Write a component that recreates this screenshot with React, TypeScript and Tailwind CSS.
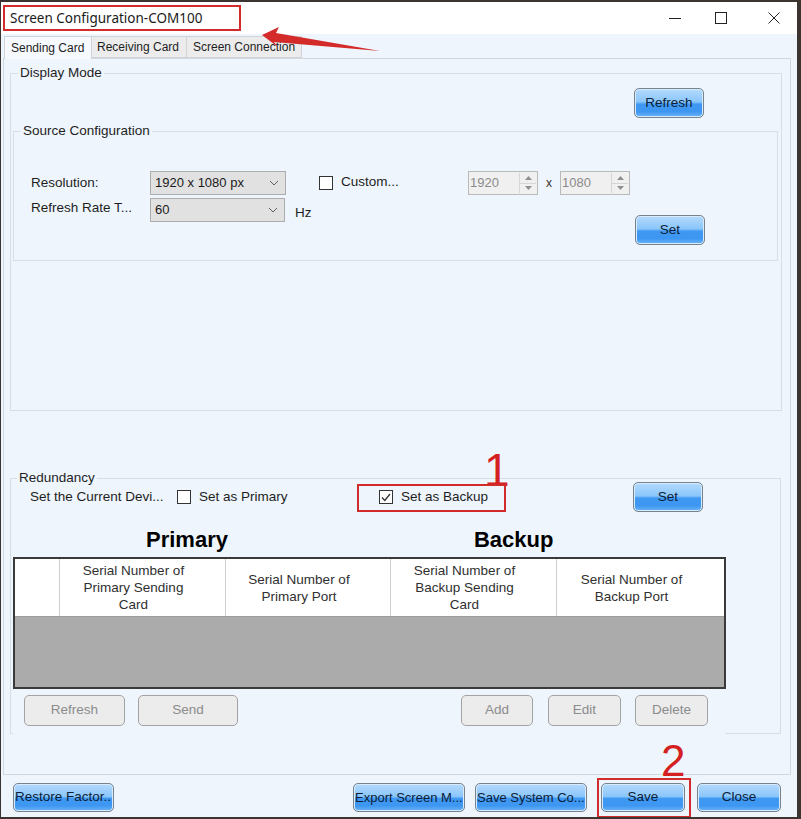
import React from 'react';

const blueBtn =
  'flex items-center justify-center rounded-[5px] border border-[#76838f] bg-[linear-gradient(180deg,#b4dafd_0%,#8ac6fb_46%,#3f98f2_54%,#3d96f1_80%,#6cb4f7_100%)] shadow-[inset_0_0_0_1px_#d6ebfd] text-[13.5px] text-[#0b1d38]';
const grayBtn =
  'flex items-center justify-center rounded-[5px] border border-[#a3a3a3] bg-[#ececec] text-[13.5px] text-[#8b8b8b]';

function Chevron() {
  return (
    <svg width="10" height="6" viewBox="0 0 10 6" className="ml-auto mr-[6px]">
      <path d="M1 1 L5 5 L9 1" fill="none" stroke="#606060" strokeWidth="1" />
    </svg>
  );
}

function Select({ value, width }: { value: string; width: string }) {
  return (
    <div className={`flex h-[24px] items-center border border-[#adadad] bg-[#e1e1e1] pl-[4px] text-[13px] text-[#1a1a1a] ${width}`}>
      <span>{value}</span>
      <Chevron />
    </div>
  );
}

function Spin({ value }: { value: string }) {
  return (
    <div className="flex h-[24px] w-[70px] items-center border border-[#b9b9b9] bg-[#f0f0f0] text-[13px] text-[#8a8a8a]">
      <span className="pl-[1px]">{value}</span>
      <div className="ml-auto mr-[1px] flex h-[20px] w-[17px] flex-col border-l border-[#d6d6d6]">
        <div className="flex flex-1 items-center justify-center border-b border-[#d6d6d6]">
          <svg width="7" height="4" viewBox="0 0 7 4"><path d="M0 4 L3.5 0 L7 4 Z" fill="#8f8f8f" /></svg>
        </div>
        <div className="flex flex-1 items-center justify-center">
          <svg width="7" height="4" viewBox="0 0 7 4"><path d="M0 0 L3.5 4 L7 0 Z" fill="#8f8f8f" /></svg>
        </div>
      </div>
    </div>
  );
}

function Check({ checked }: { checked?: boolean }) {
  return (
    <div className="flex h-[14px] w-[14px] shrink-0 items-center justify-center border border-[#333] bg-white">
      {checked && (
        <svg width="10" height="9" viewBox="0 0 10 9">
          <path d="M1 4.5 L3.8 7.5 L9 1" fill="none" stroke="#333" strokeWidth="1.3" />
        </svg>
      )}
    </div>
  );
}

const HEAD = [
  { w: 'w-[44px]', text: '' },
  { w: 'w-[166px]', text: 'Serial Number of Primary Sending Card' },
  { w: 'w-[165px]', text: 'Serial Number of Primary Port' },
  { w: 'w-[166px]', text: 'Serial Number of Backup Sending Card' },
  { w: 'w-[168px]', text: 'Serial Number of Backup Port' },
];

export default function App() {
  return (
    <div className="relative h-[819px] w-[801px] overflow-hidden border-b-2 border-l border-r-4 border-t-2 border-[#3b3431] bg-[#eef5fc] font-['Liberation_Sans',Arial,sans-serif] text-[#1e1e1e]">
      {/* title bar */}
      <div className="flex h-[32px] items-center bg-white pl-[9px]">
        <span className="font-['Noto_Sans',sans-serif] text-[13.5px] text-[#1a1a1a]">Screen Configuration-COM100</span>
        <div className="ml-auto flex h-full items-center">
          <div className="flex h-full w-[46px] items-center justify-center">
            <svg width="12" height="12" viewBox="0 0 12 12"><path d="M0 6.5 H12" stroke="#222" strokeWidth="1" /></svg>
          </div>
          <div className="mr-[7px] flex h-full w-[46px] items-center justify-center">
            <svg width="12" height="12" viewBox="0 0 12 12"><rect x="0.5" y="0.5" width="11" height="11" fill="none" stroke="#222" strokeWidth="1" /></svg>
          </div>
          <div className="flex h-full w-[46px] items-center justify-center">
            <svg width="12" height="12" viewBox="0 0 12 12"><path d="M0.5 0.5 L11.5 11.5 M11.5 0.5 L0.5 11.5" stroke="#222" strokeWidth="1" /></svg>
          </div>
        </div>
      </div>

      {/* tabs */}
      <div className="flex h-[24px] items-end pl-[3px] text-[12px]">
        <div className="relative z-10 -mb-px flex h-[23px] w-[88px] items-center border border-b-0 border-[#d0d4d8] bg-[#f6f9fd] pl-[6px]">Sending Card</div>
        <div className="flex h-[22px] w-[95px] items-center border border-l-0 border-[#d0d4d8] bg-[#ececec] pl-[5px]">Receiving Card</div>
        <div className="flex h-[22px] w-[115px] items-center border border-l-0 border-[#d0d4d8] bg-[#ececec] pl-[6px]">Screen Connection</div>
      </div>

      {/* tab panel */}
      <div className="ml-[2px] flex h-[717px] w-[788px] flex-col border border-[#d3d8dc] bg-[#eef5fc] text-[13.5px]">
        <fieldset className="ml-[6px] mt-[6px] h-[346px] w-[772px] border border-[#d6dfe6]">
          <legend className="ml-[7px] px-[2px] leading-[16px]">Display Mode</legend>
          <div className="mt-[7px] flex justify-end pr-[77px]">
            <button className={`${blueBtn} h-[30px] w-[70px]`}>Refresh</button>
          </div>
          <fieldset className="ml-[2px] mt-[5px] h-[138px] w-[765px] border border-[#d6dfe6]">
            <legend className="ml-[7px] px-[2px] leading-[16px]">Source Configuration</legend>
            <div className="mt-[32px] pl-[17px] pr-[72px]">
              <div className="flex h-[24px] items-center">
                <span className="w-[119px]">Resolution:</span>
                <Select value="1920 x 1080 px" width="w-[136px]" />
                <div className="ml-[33px]"><Check /></div>
                <span className="ml-[8px] w-[127px] -translate-y-[1px]">Custom...</span>
                <Spin value="1920" />
                <span className="w-[22px] text-center text-[12px] text-[#333]">x</span>
                <Spin value="1080" />
              </div>
              <div className="mt-[3px] flex items-start">
                <span className="flex h-[24px] w-[119px] -translate-y-[2px] items-center">Refresh Rate T...</span>
                <Select value="60" width="w-[135px]" />
                <span className="ml-[10px] flex h-[25px] items-end">Hz</span>
                <button className={`${blueBtn} ml-auto mt-[17px] h-[30px] w-[70px]`}>Set</button>
              </div>
            </div>
          </fieldset>
        </fieldset>

        <fieldset className="ml-[6px] mt-[59px] h-[263px] w-[771px] border border-b-0 border-[#d6dfe6]">
          <legend className="ml-[6px] px-[2px] leading-[16px]">Redundancy</legend>
          <div className="-mt-[4px] flex h-[30px] items-center pl-[19px]">
            <span className="w-[147px]">Set the Current Devi...</span>
            <Check />
            <span className="ml-[8px] w-[180px]">Set as Primary</span>
            <Check checked />
            <span className="ml-[8px] w-[232px]">Set as Backup</span>
            <button className={`${blueBtn} h-[30px] w-[70px]`}>Set</button>
          </div>
          <div className="mt-[16px] flex h-[24px] items-center text-[22px] font-bold leading-[24px] text-black">
            <span className="ml-[135px]">Primary</span>
            <span className="ml-[246px]">Backup</span>
          </div>
          <div className="ml-[2px] mt-[5px] flex h-[132px] w-[713px] flex-col border-2 border-[#3a3a3a] bg-[#ababab]">
            <div className="flex h-[58px] border-b border-[#9c9c9c] bg-white">
              {HEAD.map((h, i) => (
                <div
                  key={i}
                  className={`flex items-center justify-center pl-[11px] pr-[29px] text-center text-[13.5px] leading-[17px] text-[#303030] ${h.w} ${i > 0 ? 'border-l border-[#cfcfcf]' : ''}`}
                >
                  {h.text}
                </div>
              ))}
            </div>
          </div>
          <div className="mt-[6px] flex h-[31px]">
            <button className={`${grayBtn} ml-[13px] w-[101px]`}>Refresh</button>
            <button className={`${grayBtn} ml-[13px] w-[100px]`}>Send</button>
            <button className={`${grayBtn} ml-[223px] w-[72px]`}>Add</button>
            <button className={`${grayBtn} ml-[15px] w-[73px]`}>Edit</button>
            <button className={`${grayBtn} ml-[14px] w-[73px]`}>Delete</button>
          </div>
        </fieldset>
        <div className="ml-[6px] flex h-px w-[771px]">
          <div className="w-[3px] bg-[#d6dfe6]" />
          <div className="ml-auto w-[56px] bg-[#d6dfe6]" />
        </div>
      </div>

      {/* bottom buttons */}
      <div className="mt-[8px] flex h-[29px]">
        <button className={`${blueBtn} ml-[12px] w-[101px] justify-start overflow-hidden whitespace-nowrap pl-[1px]`}>Restore Factor..</button>
        <button className={`${blueBtn} ml-[239px] w-[112px] justify-start overflow-hidden whitespace-nowrap pl-[1px] !text-[13px]`}>Export Screen M...</button>
        <button className={`${blueBtn} ml-[10px] w-[112px] justify-start overflow-hidden whitespace-nowrap pl-[1px] !text-[13px]`}>Save System Co...</button>
        <button className={`${blueBtn} ml-[14px] w-[84px]`}>Save</button>
        <button className={`${blueBtn} ml-[12px] w-[84px]`}>Close</button>
      </div>

      {/* annotations */}
      <div className="pointer-events-none absolute left-[2px] top-[3px] h-[26px] w-[238px] border-2 border-[#d22b2b]" />
      <svg className="pointer-events-none absolute left-0 top-0" width="801" height="819" viewBox="0 0 801 819">
        <polygon points="261,33 278,25 275,31 379,49 273,40 277,45" fill="#d42a2a" />
      </svg>
      <div className="pointer-events-none absolute left-[483px] top-[445px] text-[46px] leading-[46px] text-[#d42020]">1</div>
      <div className="pointer-events-none absolute left-[356px] top-[482px] h-[28px] w-[149px] border-2 border-[#d22b2b]" />
      <div className="pointer-events-none absolute left-[596px] top-[776px] h-[40px] w-[94px] border-2 border-[#d22b2b]" />
      <div className="pointer-events-none absolute left-[660px] top-[737px] text-[44px] leading-[44px] text-[#d42020]">2</div>
    </div>
  );
}
